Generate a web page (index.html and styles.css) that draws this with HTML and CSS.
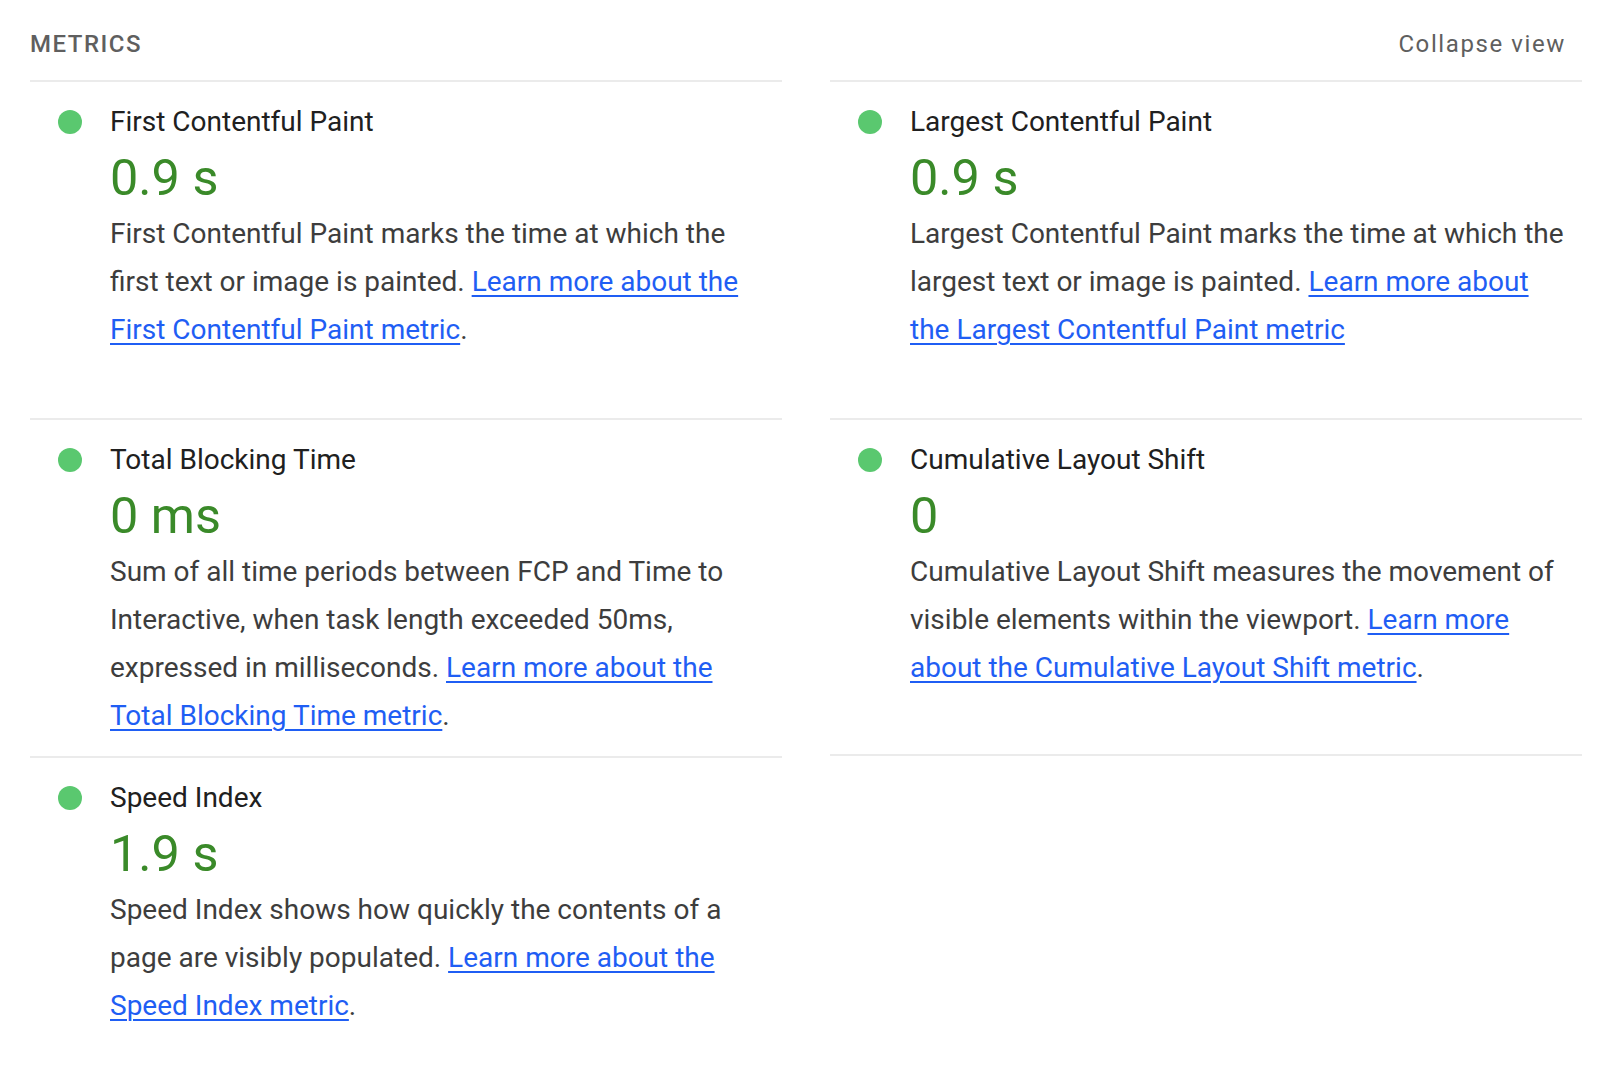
FILE: index.html
```html
<!DOCTYPE html>
<html lang="en">
<head>
<meta charset="utf-8">
<title>Metrics</title>
<link rel="stylesheet" href="styles.css">
</head>
<body>
<div class="page">
  <div class="group-header">
    <span class="group-title">Metrics</span>
    <span class="toggle-label">Collapse view</span>
  </div>
  <div class="metrics">
    <div class="metric">
      <div class="inner">
        <span class="dot"></span>
        <div class="title">First Contentful Paint</div>
        <div class="value">0.9&nbsp;s</div>
        <div class="desc">First Contentful Paint marks the time at which the first text or image is painted. <a href="#">Learn more about the First Contentful Paint metric</a>.</div>
      </div>
    </div>
    <div class="metric">
      <div class="inner">
        <span class="dot"></span>
        <div class="title">Largest Contentful Paint</div>
        <div class="value">0.9&nbsp;s</div>
        <div class="desc">Largest Contentful Paint marks the time at which the largest text or image is painted. <a href="#">Learn more about the Largest Contentful Paint metric</a></div>
      </div>
    </div>
    <div class="metric">
      <div class="inner">
        <span class="dot"></span>
        <div class="title">Total Blocking Time</div>
        <div class="value">0&nbsp;ms</div>
        <div class="desc">Sum of all time periods between FCP and Time to Interactive, when task length exceeded 50ms, expressed in milliseconds. <a href="#">Learn more about the Total Blocking Time metric</a>.</div>
      </div>
    </div>
    <div class="metric last">
      <div class="inner">
        <span class="dot"></span>
        <div class="title">Cumulative Layout Shift</div>
        <div class="value">0</div>
        <div class="desc">Cumulative Layout Shift measures the movement of visible elements within the viewport. <a href="#">Learn more about the Cumulative Layout Shift metric</a>.</div>
      </div>
    </div>
    <div class="metric last">
      <div class="inner">
        <span class="dot"></span>
        <div class="title">Speed Index</div>
        <div class="value">1.9&nbsp;s</div>
        <div class="desc">Speed Index shows how quickly the contents of a page are visibly populated. <a href="#">Learn more about the Speed Index metric</a>.</div>
      </div>
    </div>
  </div>
</div>
</body>
</html>
```
FILE: styles.css
```css
html, body {
  margin: 0;
  padding: 0;
  background: #ffffff;
}

body {
  font-family: Roboto, "Liberation Sans", Arial, sans-serif;
  -webkit-font-smoothing: antialiased;
}

.page {
  padding: 0 26px 0 30px;
}

.group-header {
  display: flex;
  justify-content: space-between;
  align-items: baseline;
  font-size: 24px;
  line-height: 48px;
  padding: 20px 16px 12px 0;
  color: #5f5f5f;
}

.group-title {
  text-transform: uppercase;
  font-weight: 500;
  letter-spacing: 1.5px;
}

.toggle-label {
  letter-spacing: 1.6px;
}

.metrics {
  display: grid;
  grid-template-columns: 1fr 1fr;
  grid-auto-rows: 1fr;
  column-gap: 48px;
}

.metric {
  border-top: 2px solid #ebebeb;
}

.metric.last {
  border-bottom: 2px solid #ebebeb;
}

.inner {
  display: grid;
  grid-template-columns: 64px 1fr;
  align-items: center;
  padding: 16px;
}

.dot {
  width: 24px;
  height: 24px;
  margin-left: 12px;
  border-radius: 50%;
  background: #5ac86f;
}

.title {
  font-size: 28px;
  line-height: 48px;
  color: #202020;
}

.value {
  grid-column: 2;
  font-size: 50.4px;
  line-height: 48px;
  margin: 8px 0;
  color: #3a8a29;
  white-space: nowrap;
}

.desc {
  grid-column: 2;
  font-size: 28px;
  line-height: 48px;
  color: #3d3d3d;
}

.desc a {
  color: #1f5ef4;
  text-decoration: underline;
  text-decoration-thickness: 2px;
  text-underline-offset: 4px;
}
```
